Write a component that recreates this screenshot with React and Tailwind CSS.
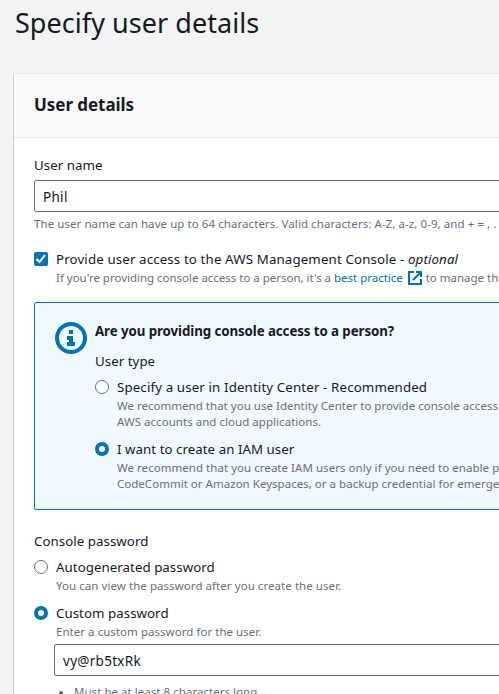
import React from "react";

const FONT = "font-['Noto_Sans','Open_Sans',sans-serif]";

function Label({ children, className = "tracking-[0.04px]" }) {
  return (
    <div className="h-[22px] text-[13.3px] leading-[22px] text-[#16191f]">
      <span className={className}>{children}</span>
    </div>
  );
}

function Hint({ children, className = "tracking-[0.04px]" }) {
  return (
    <div className="h-4 text-[11.5px] leading-4 text-[#687078]">
      <span className={className}>{children}</span>
    </div>
  );
}

function Radio({ checked }) {
  return checked ? (
    <span className="mt-1 h-3.5 w-3.5 shrink-0 rounded-full border-4 border-[#0073bb] bg-white" />
  ) : (
    <span className="mt-1 h-3.5 w-3.5 shrink-0 rounded-full border border-[#687078] bg-white" />
  );
}

function Checkbox() {
  return (
    <span className="mt-1 h-3.5 w-3.5 shrink-0 rounded-[2px] bg-[#0073bb]">
      <svg viewBox="0 0 14 14" className="block h-3.5 w-3.5" fill="none" stroke="#fff" strokeWidth="2">
        <path d="M2.5 7 L5.5 10 L11 3.2" />
      </svg>
    </span>
  );
}

function Field({ children, className = "" }) {
  return (
    <div className="flex h-8 w-[900px] items-center rounded-[2px] border border-[#687078] bg-white px-2 pt-px text-[13.5px] leading-[22px] text-[#16191f]">
      <span className={className}>{children}</span>
    </div>
  );
}

function InfoIcon() {
  return (
    <svg viewBox="0 0 32 32" className="block h-8 w-8 shrink-0">
      <circle cx="16" cy="16" r="14" fill="none" stroke="#0073bb" strokeWidth="4" />
      <path fill="#0073bb" d="M14 8h4v4h-4zM12 14h6v6h2v4h-8v-4h2v-2h-2z" />
    </svg>
  );
}

function ExternalIcon() {
  return (
    <svg viewBox="0 0 14 14" className="ml-[5px] mr-1 inline-block h-3.5 w-3.5 align-[-3px]" fill="none" stroke="#0073bb" strokeWidth="2">
      <path d="M6 1H1v12h12V8M8 1h5v5M13 1L5 9" />
    </svg>
  );
}

export default function App() {
  return (
    <div className={`h-[694px] w-[499px] overflow-hidden whitespace-nowrap bg-[#f2f3f3] pl-[13px] ${FONT}`}>
      <h1 className="h-[73px] pl-0.5 pt-[5px] text-[27px] leading-9 text-[#16191f]">
        <span className="tracking-[0.05px]">Specify user details</span>
      </h1>
      <div className="h-[700px] w-[950px] border-l border-t border-l-[#c8cccc] border-t-[#eaeded] bg-white">
        <div className="flex h-16 items-center border-b border-[#eaeded] bg-[#fafafa] pb-px pl-5 text-[17px] font-bold leading-[22px] text-[#16191f]">
          <span className="tracking-[-0.05px]">User details</span>
        </div>
        <div className="pl-5 pt-4">
          <Label>User name</Label>
          <div className="mt-1"><Field className="tracking-[0.3px]">Phil</Field></div>
          <div className="mt-1">
            <Hint className="tracking-[0.07px]">The user name can have up to 64 characters. Valid characters: A-Z, a-z, 0-9, and + = , . @ _ - (hyphen)</Hint>
          </div>
          <div className="mt-4 flex gap-2">
            <Checkbox />
            <div>
              <Label className="tracking-[0.13px]">Provide user access to the AWS Management Console - <em>optional</em></Label>
              <Hint className="tracking-[-0.015px]">
                If you're providing console access to a person, it's a <span className="text-[#0073bb]">best practice</span>
                <ExternalIcon />
                to manage their access in IAM Identity Center.
              </Hint>
            </div>
          </div>
          <div className="mt-4 flex h-[208px] w-[900px] gap-2 rounded-[2px] border border-[#0073bb] bg-[#f1faff] pl-5 pt-[17px]">
            <div className="pt-0.5"><InfoIcon /></div>
            <div>
              <Label className="font-bold tracking-[-0.08px]">Are you providing console access to a person?</Label>
              <div className="mt-2"><Label>User type</Label></div>
              <div className="mt-1 flex gap-2">
                <Radio />
                <div>
                  <Label className="tracking-[0.13px]">Specify a user in Identity Center - Recommended</Label>
                  <Hint className="tracking-[0.02px]">We recommend that you use Identity Center to provide console access to a person.</Hint>
                  <Hint>AWS accounts and cloud applications.</Hint>
                </div>
              </div>
              <div className="mt-2 flex gap-2">
                <Radio checked />
                <div>
                  <Label>I want to create an IAM user</Label>
                  <Hint>We recommend that you create IAM users only if you need to enable programmatic</Hint>
                  <Hint className="tracking-[0.02px]">CodeCommit or Amazon Keyspaces, or a backup credential for emergency</Hint>
                </div>
              </div>
            </div>
          </div>
          <div className="mt-5"><Label>Console password</Label></div>
          <div className="mt-1 flex gap-2">
            <Radio />
            <div>
              <Label>Autogenerated password</Label>
              <Hint className="tracking-[0.06px]">You can view the password after you create the user.</Hint>
            </div>
          </div>
          <div className="mt-2 flex gap-2">
            <Radio checked />
            <div>
              <Label>Custom password</Label>
              <Hint>Enter a custom password for the user.</Hint>
            </div>
          </div>
          <div className="ml-5 mt-1"><Field className="tracking-[0.28px]">vy@rb5txRk</Field></div>
          <div className="ml-[25px] mt-2 flex items-center">
            <span className="mr-[11px] mt-0.5 h-1 w-1 rounded-full bg-[#687078]" />
            <Hint>Must be at least 8 characters long</Hint>
          </div>
        </div>
      </div>
    </div>
  );
}
